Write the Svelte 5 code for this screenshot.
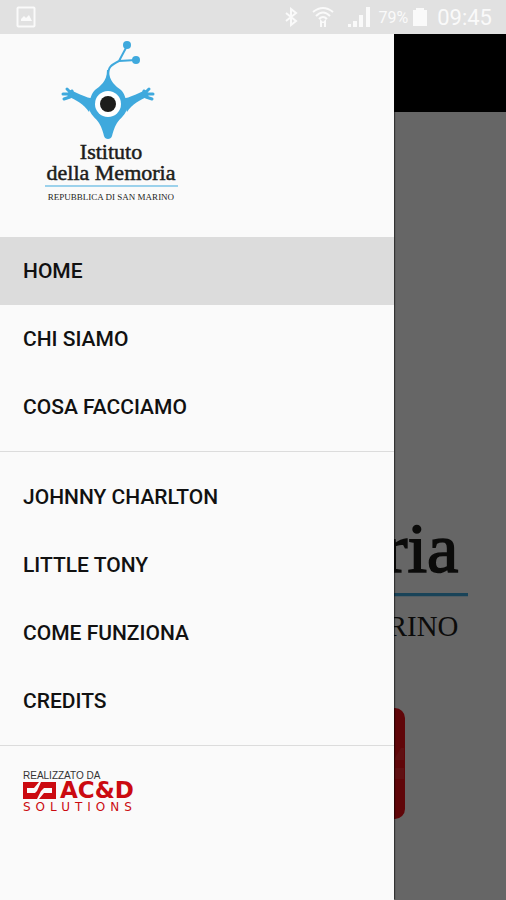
<script lang="ts">
  interface MenuItem {
    id: string;
    label: string;
  }

  const groups: MenuItem[][] = [
    [
      { id: 'home', label: 'HOME' },
      { id: 'chi-siamo', label: 'CHI SIAMO' },
      { id: 'cosa-facciamo', label: 'COSA FACCIAMO' },
    ],
    [
      { id: 'johnny-charlton', label: 'JOHNNY CHARLTON' },
      { id: 'little-tony', label: 'LITTLE TONY' },
      { id: 'come-funziona', label: 'COME FUNZIONA' },
      { id: 'credits', label: 'CREDITS' },
    ],
  ];

  let active = $state('home');
</script>

{#snippet arm()}
  <path d="M50 58C44 59 36 54 28 51L23 56C32 60 40 64 45 72Z" fill="#3fa9dd" />
  <path
    d="M28 54L23 49M26 54L19 54M26 57L20 59M29 54L28 51"
    fill="none"
    stroke="#3fa9dd"
    stroke-width="3"
    stroke-linecap="round"
  />
{/snippet}

{#snippet emblem()}
  <path
    d="M64 36C64 27 67 25 75 21L83 6M75 21L92 20"
    fill="none"
    stroke="#3fa9dd"
    stroke-width="2"
  />
  <g fill="#3fa9dd">
    <circle cx="83" cy="5" r="4" />
    <circle cx="92" cy="20" r="4" />
    <path
      d="M63 30C63 42 56 46 51 50C47 54 47 58 45 62V68C46 75 52 78 55 83C58 88 59 92 60 96C61 100 67 100 68 96C69 92 70 88 73 83C76 78 82 75 83 68V62C81 58 81 54 77 50C72 46 65 42 65 30Z"
    />
  </g>
  {@render arm()}
  <g transform="translate(128 0) scale(-1 1)">{@render arm()}</g>
  <circle cx="64" cy="64" r="13" fill="#fff" />
  <circle cx="64" cy="64" r="8" fill="#1d1d1b" />
  <path d="M1 146H134" stroke="#3fa9dd" />
{/snippet}

<div class="screen">
  <header class="status-bar">
    <svg class="picture-icon" viewBox="0 0 20 22">
      <rect x="1.5" y="1.5" width="17" height="19" rx="1" fill="none" stroke="#fafafa" stroke-width="2" />
      <path d="M5 15V13L8 10L10 12L13 9L16 15Z" fill="#fafafa" />
    </svg>
    <div class="indicators">
      <svg width="14" height="20" viewBox="0 0 14 20">
        <path d="M2 6L12 14L7 18V2L12 6L2 14" fill="none" stroke="#fafafa" stroke-width="2" />
      </svg>
      <svg width="22" height="22" viewBox="0 0 22 22">
        <g fill="none" stroke="#fafafa" stroke-width="2">
          <path d="M1 6Q11 -2 21 6" />
          <path d="M4 10Q11 3 18 10" />
          <path d="M7 13Q11 9 15 13" />
        </g>
        <path d="M8 13L11 16L14 13V21H12V17H10V21H8Z" fill="#fafafa" />
      </svg>
      <svg width="22" height="22" viewBox="0 0 22 22" fill="#fafafa">
        <path d="M0 18H3V21H0ZM5 15H9V21H5ZM11 9H15V21H11ZM18 1H22V21H18Z" />
      </svg>
      <span class="battery">79%</span>
      <svg width="16" height="20" viewBox="0 0 16 20" fill="#fafafa">
        <path d="M4 1H12V3H15V19H1V3H4Z" />
      </svg>
      <span class="clock">09:45</span>
    </div>
  </header>

  <main>
    <div class="app-bar"></div>
    <div class="home">
      <svg class="logo" viewBox="0 0 134 164">
        {@render emblem()}
        <!-- only the end of each line clears the drawer -->
        <g text-anchor="end">
          <text class="logo-name" x="131" y="139">ria</text>
          <text class="logo-place" x="131" y="159">RINO</text>
        </g>
      </svg>
      <div class="banner">
        <svg width="10" height="32" viewBox="0 0 10 32">
          <path d="M0 10L6 0H9V12H0ZM0 20H9V31H0Z" fill="#fff" opacity="0.1" />
        </svg>
      </div>
    </div>
  </main>

  <div class="scrim"></div>

  <aside class="drawer">
    <div class="drawer-header">
      <svg class="logo" viewBox="0 0 134 164">
        {@render emblem()}
        <g text-anchor="middle">
          <text class="logo-name" x="67" y="119">Istituto</text>
          <text class="logo-name" x="67" y="140">della Memoria</text>
          <text class="logo-place" x="67" y="160">REPUBBLICA DI SAN MARINO</text>
        </g>
      </svg>
    </div>
    <nav>
      {#each groups as group}
        <ul>
          {#each group as item}
            <li>
              <a
                href="#{item.id}"
                class:active={active === item.id}
                onclick={() => (active = item.id)}
              >
                {item.label}
              </a>
            </li>
          {/each}
        </ul>
      {/each}
    </nav>
    <a class="maker" href="#maker">
      <span class="maker-intro">REALIZZATO DA</span>
      <span class="maker-brand">
        <svg width="33" height="17" viewBox="0 0 33 17">
          <path d="M0 0H33V17H0Z" fill="#cb0a10" />
          <path
            d="M4 6H11L16 0H18L14 9L12 11H4ZM29 6H21L18 9L14 17H16L21 11H29Z"
            fill="#fafafa"
          />
        </svg>
        <span>AC&amp;D</span>
      </span>
      <span class="maker-sub">SOLUTIONS</span>
    </a>
  </aside>
</div>

<style>
  :global(body) {
    margin: 0;
  }

  .screen {
    position: relative;
    display: flex;
    flex-direction: column;
    min-height: 100vh;
    background: #fff;
    font-family: Roboto, sans-serif;
  }

  .status-bar {
    display: flex;
    align-items: center;
    justify-content: space-between;
    height: 34px;
    padding: 0 14px 0 16px;
    background: #e1e1e1;
    color: #fafafa;
  }

  .picture-icon {
    width: 20px;
    height: 22px;
  }

  .indicators {
    display: flex;
    align-items: center;
    gap: 4px;
  }

  .indicators svg {
    margin: 0 5px;
  }

  .indicators .battery + svg {
    margin: 0;
  }

  .battery {
    font-size: 16px;
  }

  .clock {
    margin-left: 5px;
    font-size: 22px;
  }

  main {
    display: flex;
    flex: 1;
    flex-direction: column;
  }

  .app-bar {
    height: 78px;
    background: #000;
  }

  .home {
    display: flex;
    flex-direction: column;
    align-items: center;
    gap: 56px;
    padding: 14px 0 80px;
  }

  .logo {
    display: block;
  }

  .home .logo {
    width: 85%;
  }

  .logo-name {
    fill: #1d1d1b;
    stroke: #1d1d1b;
    stroke-width: 0.5px;
    font-family: 'Liberation Serif', serif;
    font-size: 22px;
  }

  .logo-place {
    fill: #1d1d1b;
    font-family: 'Liberation Serif', serif;
    font-size: 9px;
  }

  .banner {
    display: flex;
    align-items: center;
    justify-content: flex-end;
    width: 60%;
    height: 111px;
    border-radius: 10px;
    background: #f01018;
  }

  .scrim {
    position: absolute;
    inset: 34px 0 0;
    background: rgba(0, 0, 0, 0.6);
  }

  .drawer {
    position: absolute;
    top: 34px;
    bottom: 0;
    left: 0;
    width: calc(100% - 112px);
    background: #fafafa;
    box-shadow: 2px 0 1px -1px rgba(0, 0, 0, 0.5);
  }

  .drawer-header {
    padding: 6px 44px 33px;
  }

  .drawer-header .logo {
    width: 134px;
  }

  ul {
    margin: 0;
    padding: 11px 0 10px;
    border-bottom: 1px solid #dcdcdc;
    list-style: none;
  }

  ul:first-child {
    padding-top: 0;
  }

  nav a {
    display: block;
    padding: 0 23px;
    color: #111;
    font-size: 21px;
    font-weight: 500;
    line-height: 68px;
    text-decoration: none;
  }

  nav a.active {
    background: #dcdcdc;
  }

  .maker {
    display: inline-flex;
    flex-direction: column;
    padding: 24px 23px;
    color: #cb0a10;
    text-decoration: none;
  }

  .maker-intro {
    color: #333;
    font-family: 'Liberation Sans', sans-serif;
    font-size: 10px;
    line-height: 12px;
  }

  .maker-brand {
    display: flex;
    align-items: center;
    gap: 4px;
    font-family: 'DejaVu Sans', sans-serif;
    font-size: 23px;
    font-weight: 700;
    line-height: 17px;
  }

  .maker-sub {
    margin-top: 1px;
    font-family: 'DejaVu Sans', sans-serif;
    font-size: 12px;
    letter-spacing: 5px;
    line-height: 14px;
  }
</style>
